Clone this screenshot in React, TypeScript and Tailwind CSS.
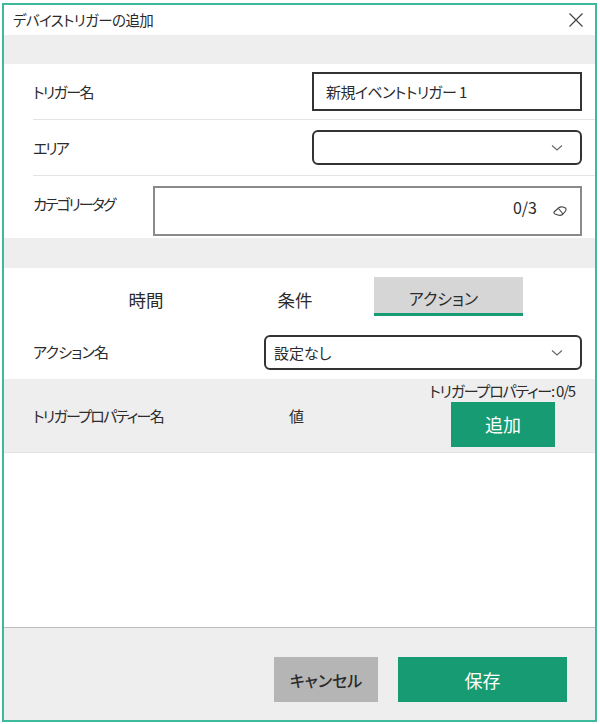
import React from "react";

const Chevron = ({ className = "" }: { className?: string }) => (
  <svg width="12" height="8" viewBox="0 0 12 8" fill="none" className={className}>
    <path d="M1 1.5 L6 6 L11 1.5" stroke="#666" strokeWidth="1.1" />
  </svg>
);

const Eraser = () => (
  <svg width="14" height="12" viewBox="0 0 14 12" fill="none">
    <path d="M1 7 L6 2.5 Q7.5 1.5 10 2 L12.5 3 Q13.5 4 12.5 6 L9.5 9.5 Q7.5 11 5 10 L2 9 Q0.5 8.2 1 7 Z" stroke="#444" strokeWidth="1.1" />
    <path d="M5.5 3.5 L10 9" stroke="#444" strokeWidth="1.1" />
  </svg>
);

const Close = () => (
  <svg width="16" height="16" viewBox="0 0 16 16" fill="none">
    <path d="M1.5 1.5 L14.5 14.5 M14.5 1.5 L1.5 14.5" stroke="#444" strokeWidth="1.2" />
  </svg>
);

export default function App() {
  return (
    <div className="w-[600px] h-[724px] bg-white pt-[3px] pb-[2px] pl-[2px] pr-[3px] text-[#2b2b2b] text-[15px] leading-none [font-family:'Noto_Sans_CJK_JP','Noto_Sans',sans-serif] [font-feature-settings:'palt']">
      <div className="h-full border-2 border-[#3fb99b] flex flex-col">
        <div className="h-[30px] shrink-0 flex items-center justify-between pl-[9px] pr-[11px]">
          <span className="text-[14.5px] tracking-[-0.6px]">デバイストリガーの追加</span>
          <Close />
        </div>
        <div className="h-[29px] shrink-0 bg-[#eeeeee]" />

        <div className="pl-[29px] shrink-0">
          <div className="h-[56px] flex items-center justify-between border-b border-[#e4e4e4] pr-[13px]">
            <span className="tracking-[-1.6px]">トリガー名</span>
            <div className="w-[270px] h-[39px] border-2 border-[#333] flex items-center px-3 tracking-[-0.6px]">新規イベントトリガー 1</div>
          </div>
          <div className="h-[56px] flex items-center justify-between border-b border-[#e4e4e4] pr-[13px]">
            <span className="tracking-[-2px]">エリア</span>
            <div className="w-[270px] h-[35px] border-2 border-[#333] rounded-[6px] flex items-center justify-end pr-[17px]">
              <Chevron />
            </div>
          </div>
          <div className="h-[62px] flex items-start pr-[13px] pt-[10px]">
            <span className="w-[120px] pt-[10px] tracking-[-2px]">カテゴリータグ</span>
            <div className="flex-1 h-[50px] border-2 border-[#8a8a8a] flex items-center justify-end gap-[16px] pr-[13px]">
              <span className="text-[16px] mb-[8px]">0/3</span>
              <Eraser />
            </div>
          </div>
        </div>

        <div className="h-[30px] shrink-0 bg-[#eeeeee]" />

        <div className="h-[48px] shrink-0 flex items-end pt-[9px]">
          <div className="ml-[67px] w-[150px] h-[39px] pt-[7px] flex items-center justify-center text-[17.5px]">時間</div>
          <div className="w-[153px] h-[39px] pt-[7px] pr-[5px] flex items-center justify-center text-[17.5px]">条件</div>
          <div className="w-[149px] h-[39px] pt-[5px] pr-[10px] flex items-center justify-center text-[16px] bg-[#d6d6d6] border-b-[3px] border-[#169b72]">アクション</div>
        </div>

        <div className="h-[63px] shrink-0 flex items-start pt-[19px] justify-between pl-[29px] pr-[13px]">
          <span className="tracking-[-0.8px] mt-[9px]">アクション名</span>
          <div className="w-[318px] h-[35px] border-2 border-[#333] rounded-[6px] flex items-center justify-between pl-[8px] pr-[17px]">
            <span>設定なし</span>
            <Chevron />
          </div>
        </div>

        <div className="h-[74px] shrink-0 bg-[#eeeeee] border-b border-[#e2e2e2] flex items-center pl-[29px]">
          <span className="w-[256px] tracking-[-1.7px]">トリガープロパティー名</span>
          <span>値</span>
          <div className="ml-auto mr-[20px] flex flex-col items-end self-start pt-[3px]">
            <span className="whitespace-nowrap leading-[18px] tracking-[-1.2px] mb-[2px]">トリガープロパティー: 0/5</span>
            <div className="mr-[20px] w-[104px] h-[45px] pb-[2px] bg-[#169b72] text-white text-[18px] flex items-center justify-center">追加</div>
          </div>
        </div>

        <div className="flex-1" />

        <div className="h-[93px] shrink-0 bg-[#eeeeee] border-t border-[#bcbcbc] flex items-start justify-end pt-[29px] pr-[28px] gap-[20px]">
          <div className="w-[104px] h-[45px] bg-[#b5b5b5] text-[16px] font-medium flex items-center justify-center">キャンセル</div>
          <div className="w-[169px] h-[45px] bg-[#169b72] text-white text-[18px] flex items-center justify-center">保存</div>
        </div>
      </div>
    </div>
  );
}
